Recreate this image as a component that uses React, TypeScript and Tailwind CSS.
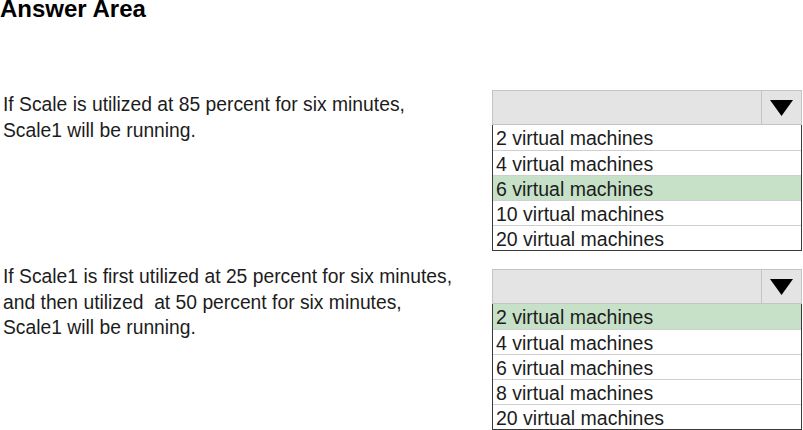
const font = { fontFamily: '"Liberation Sans", Arial, sans-serif' }

type Question = {
  lines: string[]
  options: string[]
  selected: number
  textOffset: string
}

const questions: Question[] = [
  {
    lines: ['If Scale is utilized at 85 percent for six minutes,', 'Scale1 will be running.'],
    options: ['2 virtual machines', '4 virtual machines', '6 virtual machines', '10 virtual machines', '20 virtual machines'],
    selected: 2,
    textOffset: 'mt-[2px]',
  },
  {
    lines: [
      'If Scale1 is first utilized at 25 percent for six minutes,',
      'and then utilized\u00a0 at 50 percent for six minutes,',
      'Scale1 will be running.',
    ],
    options: ['2 virtual machines', '4 virtual machines', '6 virtual machines', '8 virtual machines', '20 virtual machines'],
    selected: 0,
    textOffset: 'mt-[-5px]',
  },
]

function Dropdown({ options, selected }: { options: string[]; selected: number }) {
  return (
    <div className="w-[310px] shrink-0">
      {/* Closed select header */}
      <div className="flex h-[35px] border border-[#c4c4c4] bg-[#e4e4e4]">
        <div className="flex-1" />
        <div className="flex w-[40px] items-center justify-center border-l border-[#c4c4c4]">
          <svg width="23" height="16" viewBox="0 0 23 16" aria-hidden="true">
            <path d="M0 0h23L11.5 16z" fill="#000" />
          </svg>
        </div>
      </div>
      {/* Options list */}
      <div className="border border-t-0 border-[#3a3a3a]">
        {options.map((opt, i) => (
          <div
            key={opt}
            className={`h-[25px] pl-[3px] text-[19.5px] leading-[26px] text-[#1c1c1c] ${
              i > 0 ? 'border-t border-[#cfcfcf]' : ''
            } ${i === selected ? 'bg-[#c6e1c8]' : 'bg-white'}`}
          >
            {opt}
          </div>
        ))}
      </div>
    </div>
  )
}

export default function App() {
  return (
    <div className="h-[430px] w-[803px] overflow-hidden bg-white text-[#1c1c1c]" style={font}>
      <h1 className="text-[24px] font-bold leading-[18px] text-black">Answer Area</h1>

      <div className="mt-[72px] flex flex-col gap-[18px]">
        {questions.map((q, i) => (
          <div key={i} className="flex justify-between pr-px">
            <div className={`pl-[3px] text-[19.3px] leading-[25.5px] ${q.textOffset}`}>
              {q.lines.map((line) => (
                <div key={line}>{line}</div>
              ))}
            </div>
            <Dropdown options={q.options} selected={q.selected} />
          </div>
        ))}
      </div>
    </div>
  )
}
